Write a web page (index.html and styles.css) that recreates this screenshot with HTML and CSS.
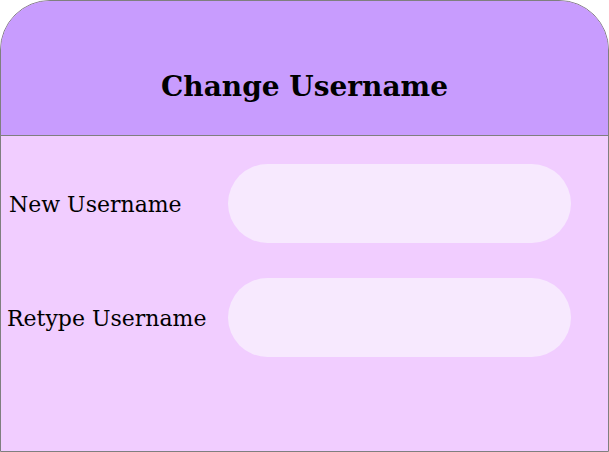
FILE: index.html
```html
<!DOCTYPE html>
<html>
<head>
<meta charset="utf-8">
<link rel="stylesheet" href="styles.css">
</head>
<body>
<div class="card">
  <div class="card-header"><h1 class="title">Change Username</h1></div>
  <div class="card-body">
    <div class="form-grid">
      <label class="label">New Username</label>
      <div class="field"></div>
      <label class="label label-2">Retype Username</label>
      <div class="field"></div>
    </div>
  </div>
</div>
</body>
</html>
```
FILE: styles.css
```css
html, body {
  margin: 0;
  padding: 0;
  background: #ffffff;
}
.card {
  width: 609px;
  height: 452px;
  box-sizing: border-box;
  border: 1px solid #7f7f7f;
  border-radius: 50px 50px 0 0;
  overflow: hidden;
  display: flex;
  flex-direction: column;
  background: #f1cdff;
  font-family: "Rockwell", "DejaVu Serif", serif;
}
.card-header {
  height: 135px;
  flex: none;
  background: #c89cfe;
  border-bottom: 1px solid #7f7f7f;
  display: flex;
  align-items: center;
  justify-content: center;
  padding-top: 36px;
  box-sizing: border-box;
}
.title {
  margin: 0;
  font-size: 28px;
  font-weight: bold;
  color: #000;
  letter-spacing: 0;
}
.card-body {
  flex: 1;
  padding-top: 28px;
}
.form-grid {
  display: grid;
  grid-template-columns: 227px 343px;
  grid-auto-rows: 79px;
  row-gap: 35px;
  align-items: center;
}
.label {
  padding-left: 8px;
  font-size: 22px;
  color: #000;
  padding-top: 2px;
  white-space: nowrap;
}
.label-2 {
  padding-left: 6px;
}
.field {
  height: 79px;
  border-radius: 40px;
  background: #f7e9fe;
}
```
